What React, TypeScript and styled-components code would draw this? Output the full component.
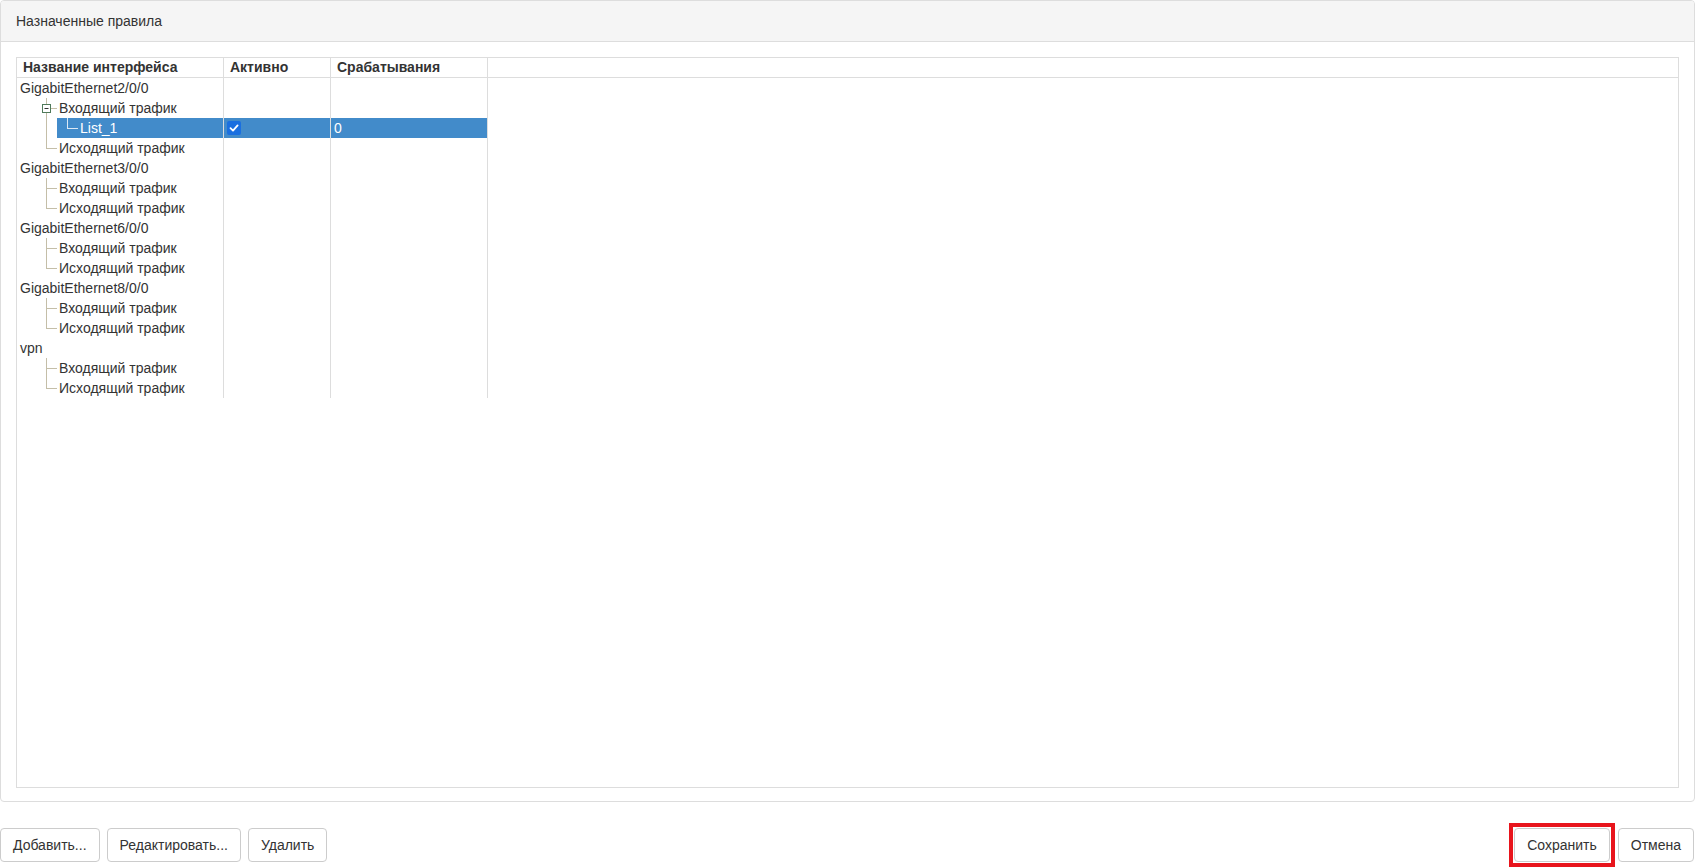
import React from "react";
import styled, { createGlobalStyle } from "styled-components";

type TreeNode = {
  name: string;
  active?: boolean;
  hits?: number;
  selected?: boolean;
  children?: TreeNode[];
};

type FlatRow = {
  name: string;
  level: number;
  last: boolean;
  parentLast: boolean;
  expander: boolean;
  selected: boolean;
  active?: boolean;
  hits?: number;
};

const traffic = (): TreeNode[] => [
  { name: "Входящий трафик" },
  { name: "Исходящий трафик" },
];

const interfaces: TreeNode[] = [
  {
    name: "GigabitEthernet2/0/0",
    children: [
      {
        name: "Входящий трафик",
        children: [{ name: "List_1", active: true, hits: 0, selected: true }],
      },
      { name: "Исходящий трафик" },
    ],
  },
  { name: "GigabitEthernet3/0/0", children: traffic() },
  { name: "GigabitEthernet6/0/0", children: traffic() },
  { name: "GigabitEthernet8/0/0", children: traffic() },
  { name: "vpn", children: traffic() },
];

const flatten = (
  nodes: TreeNode[],
  level = 0,
  parentLast = true,
  out: FlatRow[] = []
): FlatRow[] => {
  nodes.forEach((n, i) => {
    const last = i === nodes.length - 1;
    out.push({
      name: n.name,
      level,
      last,
      parentLast,
      expander: level > 0 && !!n.children?.length,
      selected: !!n.selected,
      active: n.active,
      hits: n.hits,
    });
    if (n.children) flatten(n.children, level + 1, last, out);
  });
  return out;
};

const rows = flatten(interfaces);

const LINE = "#c4bea8";

const GlobalStyle = createGlobalStyle`
  html, body {
    margin: 0;
    padding: 0;
    background: #fff;
  }
  body {
    font-family: "Liberation Sans", Arial, sans-serif;
    font-size: 14px;
    color: #333;
  }
  * { box-sizing: border-box; }
`;

const Page = styled.div`
  width: 1695px;
  height: 867px;
  overflow: hidden;
`;

const Panel = styled.section`
  border: 1px solid #ddd;
  border-radius: 4px;
  background: #fff;
`;

const PanelHeading = styled.div`
  height: 41px;
  padding: 0 15px;
  display: flex;
  align-items: center;
  background: #f5f5f5;
  border-bottom: 1px solid #ddd;
  border-radius: 3px 3px 0 0;
`;

const PanelBody = styled.div`
  padding: 15px 15px 13px;
`;

const TreeTable = styled.div`
  height: 731px;
  border: 1px solid #ddd;
  font-size: 14px;
  color: #333;
`;

const columns = "207px 107px 157px 1fr";

const HeadRow = styled.div`
  display: grid;
  grid-template-columns: ${columns};
  height: 20px;
  border-bottom: 1px solid #ddd;
`;

const HeadCell = styled.div<{ $filler?: boolean }>`
  padding: 0 6px;
  line-height: 19px;
  font-weight: bold;
  border-right: ${(p) => (p.$filler ? "none" : "1px solid #ddd")};
  white-space: nowrap;
`;

const BodyRow = styled.div`
  display: grid;
  grid-template-columns: ${columns};
  height: 20px;
`;

const NameCell = styled.div<{ $level: number }>`
  display: flex;
  border-right: 1px solid #ddd;
  padding-left: ${(p) => (p.$level === 0 ? "3px" : "0")};
  line-height: 20px;
  white-space: nowrap;
`;

const Guides = styled.svg`
  flex: none;
  display: block;
`;

const NodeLabel = styled.div<{ $selected: boolean }>`
  flex: 1;
  display: flex;
  background: ${(p) => (p.$selected ? "#428bca" : "transparent")};
  color: ${(p) => (p.$selected ? "#fff" : "#333")};
`;

const Cell = styled.div<{ $selected: boolean }>`
  display: flex;
  align-items: center;
  padding-left: 3px;
  border-right: 1px solid #ddd;
  background: ${(p) => (p.$selected ? "#428bca" : "transparent")};
  color: ${(p) => (p.$selected ? "#fff" : "#333")};
  line-height: 20px;
`;

const CheckBox = styled.span`
  width: 14px;
  height: 14px;
  border-radius: 2px;
  background: #1a6fe0;
  display: inline-flex;
  align-items: center;
  justify-content: center;
`;

const Footer = styled.div`
  display: flex;
  justify-content: space-between;
  padding: 26px 1px 0 0;
`;

const ButtonGroup = styled.div<{ $gap?: number }>`
  display: flex;
  align-items: flex-start;
  gap: ${(p) => p.$gap ?? 7}px;
`;

const Highlight = styled.div`
  display: flex;
  margin: -5px;
  padding: 1px;
  border: 4px solid #e8141c;
`;

const Button = styled.button`
  height: 34px;
  padding: 0 12px;
  border: 1px solid #ccc;
  border-radius: 4px;
  background: #fff;
  color: #333;
  font-family: "Liberation Sans", Arial, sans-serif;
  font-size: 14px;
  cursor: pointer;
`;

const Connector = ({ row }: { row: FlatRow }) => {
  const stroke = row.selected ? "#dce8f4" : LINE;
  return (
    <Guides width={23} height={20}>
      <line
        x1={10.5}
        y1={0}
        x2={10.5}
        y2={row.last ? 10.5 : 20}
        stroke={stroke}
      />
      {row.expander ? (
        <>
          <line x1={15} y1={10.5} x2={21} y2={10.5} stroke={stroke} />
          <rect
            x={6.5}
            y={6.5}
            width={8}
            height={8}
            fill="#fff"
            stroke="#4f7a5a"
          />
          <line x1={8.5} y1={10.5} x2={12.5} y2={10.5} stroke="#333" />
        </>
      ) : (
        <line x1={10} y1={10.5} x2={21} y2={10.5} stroke={stroke} />
      )}
    </Guides>
  );
};

const TreeRow = ({ row }: { row: FlatRow }) => {
  const guideWidth = row.level > 0 ? 19 + 21 * (row.level - 1) : 0;
  return (
    <BodyRow>
      <NameCell $level={row.level}>
        {row.level > 0 && (
          <Guides width={guideWidth} height={20}>
            {row.level > 1 && !row.parentLast && (
              <line x1={29.5} y1={0} x2={29.5} y2={20} stroke={LINE} />
            )}
          </Guides>
        )}
        <NodeLabel $selected={row.selected}>
          {row.level > 0 && <Connector row={row} />}
          {row.name}
        </NodeLabel>
      </NameCell>
      <Cell $selected={row.selected}>
        {row.active && (
          <CheckBox>
            <svg width="10" height="10" viewBox="0 0 10 10">
              <path
                d="M1.5 5.2 L4 7.6 L8.6 2.4"
                fill="none"
                stroke="#fff"
                strokeWidth="1.8"
                strokeLinecap="round"
                strokeLinejoin="round"
              />
            </svg>
          </CheckBox>
        )}
      </Cell>
      <Cell $selected={row.selected}>{row.hits !== undefined ? row.hits : ""}</Cell>
      <div />
    </BodyRow>
  );
};

const App = () => {
  return (
    <Page>
      <GlobalStyle />
      <Panel>
        <PanelHeading>Назначенные правила</PanelHeading>
        <PanelBody>
          <TreeTable>
            <HeadRow>
              <HeadCell>Название интерфейса</HeadCell>
              <HeadCell>Активно</HeadCell>
              <HeadCell>Срабатывания</HeadCell>
              <HeadCell $filler />
            </HeadRow>
            {rows.map((r, i) => (
              <TreeRow key={i} row={r} />
            ))}
          </TreeTable>
        </PanelBody>
      </Panel>
      <Footer>
        <ButtonGroup>
          <Button>Добавить...</Button>
          <Button>Редактировать...</Button>
          <Button>Удалить</Button>
        </ButtonGroup>
        <ButtonGroup $gap={8}>
          <Highlight>
            <Button>Сохранить</Button>
          </Highlight>
          <Button>Отмена</Button>
        </ButtonGroup>
      </Footer>
    </Page>
  );
};

export default App;
